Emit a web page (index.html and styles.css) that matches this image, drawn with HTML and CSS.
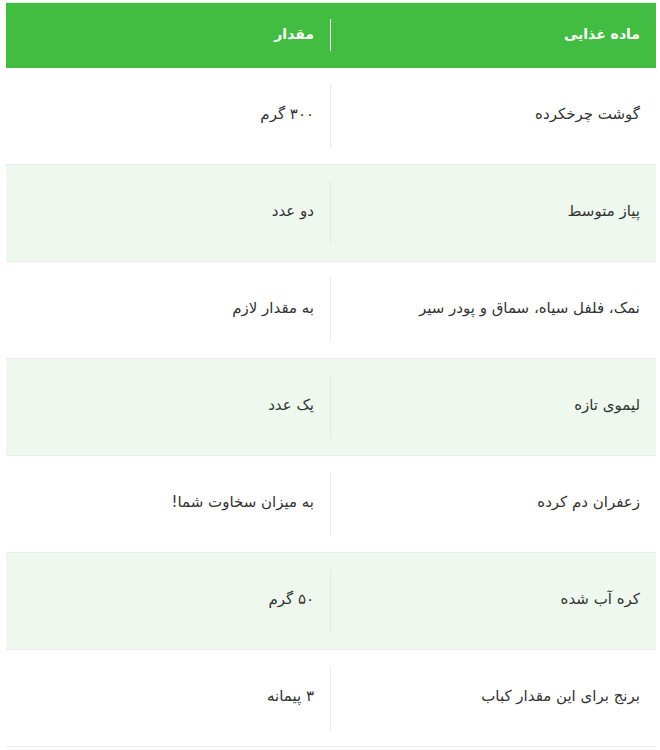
FILE: index.html
```html
<!DOCTYPE html>
<html lang="fa" dir="rtl">
<head>
<meta charset="utf-8">
<link rel="stylesheet" href="styles.css">
</head>
<body>
<div class="table">
  <div class="row head">
    <div class="cell"><div class="in">ماده غذایی</div></div>
    <div class="cell"><div class="in">مقدار</div></div>
  </div>
  <div class="row">
    <div class="cell"><div class="in">گوشت چرخکرده</div></div>
    <div class="cell"><div class="in">۳۰۰ گرم</div></div>
  </div>
  <div class="row alt">
    <div class="cell"><div class="in">پیاز متوسط</div></div>
    <div class="cell"><div class="in">دو عدد</div></div>
  </div>
  <div class="row">
    <div class="cell"><div class="in">نمک، فلفل سیاه، سماق و پودر سیر</div></div>
    <div class="cell"><div class="in">به مقدار لازم</div></div>
  </div>
  <div class="row alt">
    <div class="cell"><div class="in">لیموی تازه</div></div>
    <div class="cell"><div class="in">یک عدد</div></div>
  </div>
  <div class="row">
    <div class="cell"><div class="in">زعفران دم کرده</div></div>
    <div class="cell"><div class="in">به میزان سخاوت شما!</div></div>
  </div>
  <div class="row alt">
    <div class="cell"><div class="in">کره آب شده</div></div>
    <div class="cell"><div class="in">۵۰ گرم</div></div>
  </div>
  <div class="row">
    <div class="cell"><div class="in">برنج برای این مقدار کباب</div></div>
    <div class="cell"><div class="in">۳ پیمانه</div></div>
  </div>
</div>
</body>
</html>
```
FILE: styles.css
```css
html, body {
  margin: 0;
  padding: 0;
  background: #ffffff;
}
body {
  padding: 2px 4px 0 6px;
  font-family: "DejaVu Sans", "Noto Sans", sans-serif;
  font-size: 15px;
  color: #333333;
}
.table {
  width: 650px;
  border-top: 1px solid #e6e6e6;
}
.row {
  display: grid;
  grid-template-columns: 326px 324px;
  border-bottom: 1px solid #ebebeb;
}
.row.alt {
  background: #eff8ef;
}
.cell {
  padding: 16px 0;
}
.in {
  box-sizing: border-box;
  height: 64px;
  display: flex;
  align-items: center;
  padding: 0 16px 5px 0;
}
.cell:first-child .in {
  border-left: 1px solid #e8e8e8;
}
.head {
  background: #42bd41;
  border-bottom: 1px solid #42bd41;
  color: #ffffff;
  font-weight: bold;
  font-size: 14px;
}
.head .in {
  height: 32px;
  padding-bottom: 3px;
}
.head .cell:first-child .in {
  border-left: 1px solid #ffffff;
}
```
